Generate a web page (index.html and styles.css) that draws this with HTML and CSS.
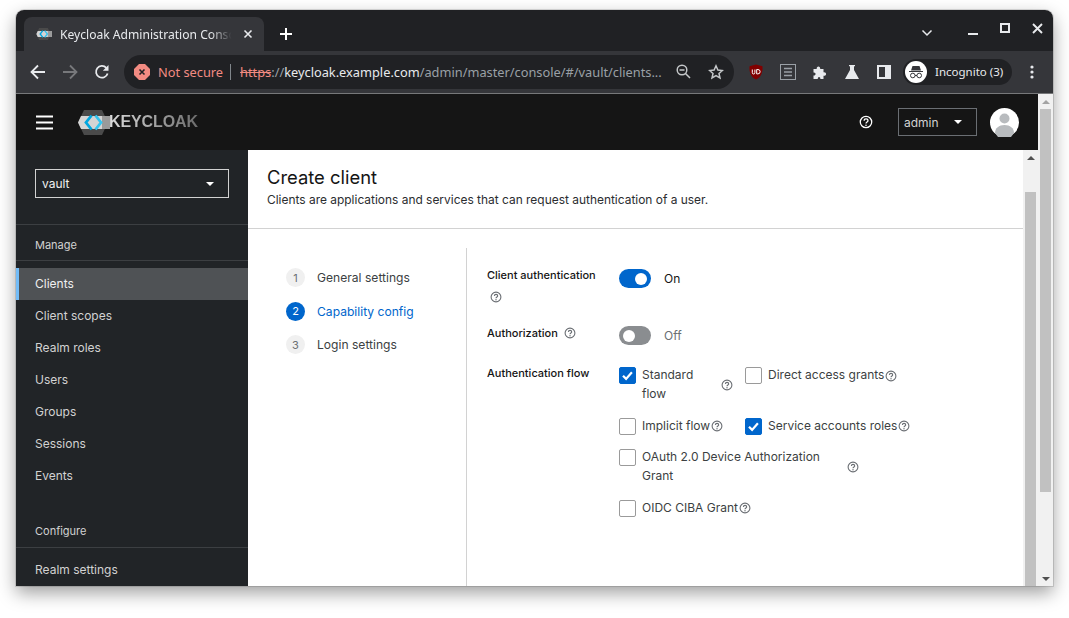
FILE: index.html
```html
<!DOCTYPE html>
<html lang="en">
<head>
    <meta charset="UTF-8">
    <meta name="viewport" content="width=device-width, initial-scale=1.0">
    <title>Keycloak Administration Console</title>
    <link rel="stylesheet" href="styles.css">
</head>
<body>
    <svg class="defs" width="0" height="0">
        <symbol id="help" viewBox="0 0 12 12">
            <circle cx="6" cy="6" r="4.9" fill="none" stroke="currentColor" stroke-width="1.1"/>
            <path d="M4.4 4.9c0-2.100 3.300-2.100 3.300 0 0 1.200-1.700 1.100-1.700 2.400" fill="none" stroke="currentColor" stroke-width="1.1"/>
            <circle cx="6" cy="8.800" r=".7" fill="currentColor"/>
        </symbol>
        <symbol id="tick" viewBox="0 0 16 16">
            <path d="M3.200 8.300l3.300 3.300 6.200-7" fill="none" stroke="#fff" stroke-width="2.400"/>
        </symbol>
        <symbol id="kc" viewBox="0 0 32 25">
            <path d="M6 0h18l6 12.500L24 25H6L0 12.500z" fill="#4a4a4a"/>
            <path d="M3 6h29v13H3l-3-6.500z" fill="#d4d4d4"/>
            <path d="M24 6h8v13h-8z" fill="#9a9a9a"/>
            <path d="M13.500 5.500L8 12.500l5.500 7" fill="none" stroke="#00a6df" stroke-width="2.800"/>
            <path d="M17.500 5.500l5.500 7-5.500 7" fill="none" stroke="#33c4ef" stroke-width="2.800"/>
        </symbol>
    </svg>

    <div class="window">
        <div class="tabstrip">
            <div class="tab">
                <svg class="favicon" width="16" height="12"><use href="#kc"/></svg>
                <span class="tab-title">Keycloak Administration Console</span>
                <svg class="tab-close" width="10" height="10" viewBox="0 0 10 10"><path d="M1.500 1.500l7 7M8.500 1.500l-7 7" stroke="#e8eaed" stroke-width="1.600"/></svg>
            </div>
            <svg class="new-tab" width="14" height="14" viewBox="0 0 14 14"><path d="M7 1v12M1 7h12" stroke="#fff" stroke-width="2"/></svg>
            <svg class="win-chevron" width="12" height="8" viewBox="0 0 12 8"><path d="M1.500 1.500L6 6l4.500-4.500" fill="none" stroke="#e8eaed" stroke-width="1.500"/></svg>
            <svg class="win-min" width="10" height="2"><rect width="10" height="2" fill="#e8eaed"/></svg>
            <svg class="win-max" width="10" height="10" viewBox="0 0 10 10"><rect x="1" y="1" width="8" height="8" fill="none" stroke="#e8eaed" stroke-width="2"/></svg>
            <svg class="win-close" width="11" height="11" viewBox="0 0 11 11"><path d="M1 1l9 9M10 1l-9 9" stroke="#e8eaed" stroke-width="1.900"/></svg>
        </div>

        <div class="toolbar">
            <svg class="nav-icon" width="16" height="16" viewBox="0 0 16 16"><path d="M15 8H2M8 1.500L1.500 8 8 14.500" fill="none" stroke="#e8eaed" stroke-width="1.800"/></svg>
            <svg class="nav-icon" width="16" height="16" viewBox="0 0 16 16"><path d="M1 8h13M8 1.500L14.500 8 8 14.500" fill="none" stroke="#77787b" stroke-width="1.800"/></svg>
            <svg class="nav-icon" width="16" height="16" viewBox="0 0 16 16"><path d="M13.600 9.500A5.900 5.900 0 1 1 12.300 3.800" fill="none" stroke="#e8eaed" stroke-width="1.800"/><path d="M14.500 1v5.800H8.800z" fill="#e8eaed"/></svg>
            <div class="omnibox">
                <svg class="warn-icon" width="16" height="16" viewBox="0 0 16 16"><path d="M5 0h6l5 5v6l-5 5H5l-5-5V5z" fill="#f28b82"/><path d="M5.500 5.500l5 5M10.500 5.500l-5 5" stroke="#202124" stroke-width="1.600"/></svg>
                <span class="not-secure">Not secure</span>
                <span class="omni-sep"></span>
                <span class="url"><s class="scheme">https</s><span class="url-dim">://</span>keycloak.example.com<span class="url-dim">/admin/master/console/#/vault/clients...</span></span>
                <svg class="omni-zoom" width="15" height="15" viewBox="0 0 15 15"><circle cx="6" cy="6" r="4.800" fill="none" stroke="#c4c7c9" stroke-width="1.500"/><path d="M9.500 9.500L14 14M3.500 6h5" stroke="#c4c7c9" stroke-width="1.500"/></svg>
                <svg class="omni-star" width="16" height="16" viewBox="0 0 16 16"><path d="M8 1.800l1.900 4.200 4.500.5-3.400 3 1 4.500L8 11.700 4 14l1-4.500-3.400-3 4.500-.5z" fill="none" stroke="#c4c7c9" stroke-width="1.500"/></svg>
            </div>
            <div class="ext-icons">
                <svg width="16" height="16" viewBox="0 0 16 16"><path d="M8 .5l6.500 1.700c.3 6-1 10.500-6.500 13.300C2.500 12.700 1.200 8.200 1.500 2.200z" fill="#800000"/><path d="M4.300 5.500v3.200a1.300 1.300 0 0 0 2.600 0V5.500M8.700 5.500v4.400h1.200a2.200 2.200 0 0 0 0-4.400z" fill="none" stroke="#fff" stroke-width="1"/></svg>
                <svg width="16" height="16" viewBox="0 0 16 16"><rect x=".5" y=".5" width="15" height="15" fill="none" stroke="#9aa0a6"/><path d="M4 4.500h8M4 8h8M4 11.500h8" stroke="#9aa0a6" stroke-width="1.500"/></svg>
                <svg width="16" height="16" viewBox="0 0 16 16"><path d="M1.500 5h3.200c-.6-3.500 4.100-3.500 3.500 0h3.300v3.200c3.500-.6 3.500 4.100 0 3.500V15H8.300c.5-2.800-3-2.800-2.500 0H1.500v-3.500c2.800.5 2.800-3.500 0-3z" fill="#e8eaed"/></svg>
                <svg width="16" height="16" viewBox="0 0 16 16"><path d="M5 1h6v1.200h-1V6l5 9H1l5-9V2.200H5z" fill="#e8eaed"/></svg>
                <svg width="16" height="16" viewBox="0 0 16 16"><rect x="1" y="1" width="14" height="14" fill="#e8eaed"/><rect x="3" y="3" width="6" height="10" fill="#35363a"/></svg>
            </div>
            <div class="incognito">
                <svg class="incognito-icon" width="22" height="22" viewBox="0 0 22 22"><circle cx="11" cy="11" r="11" fill="#fff"/><path d="M7.500 5h7l1.500 4.500H6zM4 10h14v1H4z" fill="#35363a"/><circle cx="7.800" cy="14.500" r="2.300" fill="none" stroke="#35363a"/><circle cx="14.200" cy="14.500" r="2.300" fill="none" stroke="#35363a"/><path d="M10 14.500h2" stroke="#35363a"/></svg>
                <span>Incognito (3)</span>
            </div>
            <svg class="menu-dots" width="4" height="14" viewBox="0 0 4 14"><circle cx="2" cy="2" r="1.600" fill="#e8eaed"/><circle cx="2" cy="7" r="1.600" fill="#e8eaed"/><circle cx="2" cy="12" r="1.600" fill="#e8eaed"/></svg>
        </div>

        <div class="page">
            <div class="app">
                <header class="masthead">
                    <svg class="burger" width="17" height="15" viewBox="0 0 17 15"><path d="M0 1.500h17M0 7.500h17M0 13.500h17" stroke="#fff" stroke-width="2.200"/></svg>
                    <div class="logo">
                        <svg width="32" height="25"><use href="#kc"/></svg>
                        <span class="logo-text">KEYCLOAK</span>
                    </div>
                    <svg class="top-help" width="14" height="14"><use href="#help"/></svg>
                    <div class="user-select"><span>admin</span><i class="caret"></i></div>
                    <svg class="avatar" width="29" height="29" viewBox="0 0 29 29"><circle cx="14.500" cy="14.500" r="14.500" fill="#fff"/><circle cx="14.500" cy="10.500" r="5" fill="#b8bbbe"/><path d="M5 25c0-5 4-8 9.500-8s9.500 3 9.500 8l-3 4H8z" fill="#b8bbbe"/></svg>
                </header>

                <div class="app-body">
                    <aside class="sidebar">
                        <div class="realm-wrap">
                            <div class="realm-select"><span>vault</span><i class="caret"></i></div>
                        </div>
                        <div class="side-group">Manage</div>
                        <ul class="side-list">
                            <li class="active">Clients</li>
                            <li>Client scopes</li>
                            <li>Realm roles</li>
                            <li>Users</li>
                            <li>Groups</li>
                            <li>Sessions</li>
                            <li>Events</li>
                        </ul>
                        <div class="side-group configure">Configure</div>
                        <ul class="side-list">
                            <li>Realm settings</li>
                        </ul>
                    </aside>

                    <main class="content">
                        <div class="page-head">
                            <h1>Create client</h1>
                            <p>Clients are applications and services that can request authentication of a user.</p>
                        </div>
                        <div class="wizard">
                            <ol class="steps">
                                <li><span class="step-num">1</span>General settings</li>
                                <li class="current"><span class="step-num">2</span>Capability config</li>
                                <li><span class="step-num">3</span>Login settings</li>
                            </ol>
                            <form class="cap-form">
                                <div class="field field-auth">
                                    <div class="field-label">
                                        <div>Client authentication</div>
                                        <svg class="help" width="12" height="12"><use href="#help"/></svg>
                                    </div>
                                    <div class="switch-row"><span class="switch on"></span><span>On</span></div>
                                </div>
                                <div class="field field-authz">
                                    <div class="field-label">Authorization <svg class="help help-inline" width="12" height="12"><use href="#help"/></svg></div>
                                    <div class="switch-row off"><span class="switch"></span><span>Off</span></div>
                                </div>
                                <div class="field">
                                    <div class="field-label">Authentication flow</div>
                                    <div class="flows">
                                        <div class="flow-row">
                                            <div class="check check-standard">
                                                <span class="box checked"><svg width="16" height="16"><use href="#tick"/></svg></span>
                                                <span class="check-text">Standard flow</span>
                                                <svg class="help" width="12" height="12"><use href="#help"/></svg>
                                            </div>
                                            <div class="check">
                                                <span class="box"></span>
                                                <span class="check-text">Direct access grants</span>
                                                <svg class="help" width="12" height="12"><use href="#help"/></svg>
                                            </div>
                                        </div>
                                        <div class="flow-row">
                                            <div class="check check-implicit">
                                                <span class="box"></span>
                                                <span class="check-text">Implicit flow</span>
                                                <svg class="help" width="12" height="12"><use href="#help"/></svg>
                                            </div>
                                            <div class="check">
                                                <span class="box checked"><svg width="16" height="16"><use href="#tick"/></svg></span>
                                                <span class="check-text">Service accounts roles</span>
                                                <svg class="help" width="12" height="12"><use href="#help"/></svg>
                                            </div>
                                        </div>
                                        <div class="check check-oauth">
                                            <span class="box"></span>
                                            <span class="check-text">OAuth 2.0 Device Authorization Grant</span>
                                            <svg class="help" width="12" height="12"><use href="#help"/></svg>
                                        </div>
                                        <div class="check">
                                            <span class="box"></span>
                                            <span class="check-text">OIDC CIBA Grant</span>
                                            <svg class="help" width="12" height="12"><use href="#help"/></svg>
                                        </div>
                                    </div>
                                </div>
                            </form>
                        </div>
                    </main>

                    <div class="scrollbar inner">
                        <i class="arrow up"></i>
                        <div class="thumb"></div>
                    </div>
                </div>
            </div>

            <div class="scrollbar outer">
                <i class="arrow up"></i>
                <div class="thumb"></div>
                <i class="arrow down"></i>
            </div>
        </div>
    </div>
</body>
</html>
```

FILE: styles.css
```css
* {
    box-sizing: border-box;
}
html, body {
    height: 100%;
}
body {
    margin: 0;
    padding: 10px 16px 32px;
    background: #fff;
    overflow: hidden;
    font-family: Inter, "Open Sans", sans-serif;
}
.defs {
    position: absolute;
}
svg {
    display: block;
    flex: none;
}
.window {
    width: 1037px;
    height: 576px;
    display: flex;
    flex-direction: column;
    overflow: hidden;
    border-radius: 8px 8px 0 0;
    box-shadow: 0 0 0 1px rgba(0,0,0,0.12), 0 7px 18px rgba(0,0,0,0.38);
    position: relative;
}

/* tab strip */
.tabstrip {
    height: 41px;
    background: #202124;
    display: flex;
    align-items: flex-start;
    padding: 7px 0 0 8px;
    flex: none;
}
.tab {
    width: 240px;
    height: 34px;
    background: #35363a;
    border-radius: 8px 8px 0 0;
    display: flex;
    align-items: center;
    padding: 0 11px 0 12px;
    font: 12.1px "Noto Sans", sans-serif;
    color: #e8eaed;
}
.favicon {
    margin-right: 8px;
}
.tab-title {
    flex: 1;
    overflow: hidden;
    white-space: nowrap;
    -webkit-mask-image: linear-gradient(90deg, #000 85%, transparent 97%);
    mask-image: linear-gradient(90deg, #000 85%, transparent 97%);
}
.tab-close {
    margin-left: 6px;
}
.new-tab {
    margin: 10px 0 0 15px;
}
.win-chevron {
    margin: 12px 0 0 628px;
}
.win-min {
    margin: 16px 0 0 35px;
}
.win-max {
    margin: 6px 0 0 22px;
}
.win-close {
    margin: 6px 0 0 22px;
}

/* toolbar */
.toolbar {
    height: 43px;
    background: #35363a;
    border-bottom: 1px solid #77787a;
    display: flex;
    align-items: center;
    padding: 0 0 1px 14px;
    flex: none;
}
.nav-icon {
    margin-right: 16px;
}
.omnibox {
    width: 610px;
    height: 34px;
    margin-left: -2px;
    background: #202124;
    border-radius: 17px;
    display: flex;
    align-items: center;
    padding: 0 10px;
    font: 12.8px "Noto Sans", sans-serif;
    color: #e8eaed;
    white-space: nowrap;
}
.not-secure {
    color: #f28b82;
    margin-left: 8px;
}
.omni-sep {
    width: 1px;
    height: 16px;
    background: #80868b;
    margin: 0 9px 0 7px;
}
.scheme {
    color: #f28b82;
}
.url-dim {
    color: #9aa0a6;
}
.omni-zoom {
    margin-left: auto;
}
.omni-star {
    margin-left: 17px;
}
.ext-icons {
    display: flex;
    align-items: center;
    gap: 16px;
    margin-left: 14px;
}
.incognito {
    width: 109px;
    height: 26px;
    margin-left: 11px;
    background: #202124;
    border-radius: 13px;
    display: flex;
    align-items: center;
    padding-left: 2px;
    font: 11.5px "Noto Sans", sans-serif;
    color: #e8eaed;
}
.incognito-icon {
    margin-right: 8px;
}
.menu-dots {
    margin-left: 18px;
}

/* page */
.page {
    flex: 1;
    display: flex;
    min-height: 0;
}
.app {
    flex: 1;
    display: flex;
    flex-direction: column;
    min-width: 0;
}
.masthead {
    height: 56px;
    background: #151515;
    display: flex;
    align-items: center;
    padding: 0 19px 0 20px;
    flex: none;
}
.logo {
    display: flex;
    align-items: center;
    margin-left: 25px;
}
.logo-text {
    font: bold 16px "Liberation Sans", sans-serif;
    letter-spacing: -0.1px;
    margin-left: -1px;
    background: linear-gradient(90deg, #dcdcdc, #6c6c6c);
    -webkit-background-clip: text;
    background-clip: text;
    color: transparent;
}
.top-help {
    margin-left: auto;
    color: #fff;
}
.user-select {
    width: 79px;
    height: 28px;
    margin-left: 25px;
    border: 1px solid #6a6e73;
    display: flex;
    align-items: center;
    justify-content: space-between;
    padding: 0 14px 0 5px;
    font-size: 12px;
    color: #d2d2d2;
}
.caret {
    width: 0;
    height: 0;
    border-left: 4px solid transparent;
    border-right: 4px solid transparent;
    border-top: 4px solid #fff;
}
.avatar {
    margin-left: 13px;
}
.app-body {
    flex: 1;
    display: flex;
    min-height: 0;
}

/* sidebar */
.sidebar {
    width: 232px;
    background: #212427;
    color: #d2d2d2;
    font-size: 12px;
    flex: none;
    overflow: hidden;
}
.realm-wrap {
    height: 75px;
    padding: 19px 19px 0;
    border-bottom: 1px solid #3c3f42;
}
.realm-select {
    height: 29px;
    border: 1px solid #d2d2d2;
    display: flex;
    align-items: center;
    justify-content: space-between;
    padding: 0 14px 0 6px;
    color: #f0f0f0;
}
.side-group {
    height: 36px;
    padding: 13px 0 0 19px;
    border-bottom: 1px solid #3c3f42;
    font-size: 11px;
}
.configure {
    margin-top: 16px;
    height: 40px;
    padding-top: 16px;
}
.side-list {
    list-style: none;
    margin: 7px 0 0;
    padding: 0;
}
.configure + .side-list {
    margin-top: 6px;
}
.side-list li {
    height: 32px;
    line-height: 32px;
    padding-left: 19px;
}
.side-list .active {
    background: #4f5255;
    border-left: 3px solid #73bcf7;
    padding-left: 16px;
    color: #f0f0f0;
}

/* main */
.content {
    flex: 1;
    background: #fff;
    color: #151515;
    min-width: 0;
    display: flex;
    flex-direction: column;
}
.page-head {
    height: 79px;
    padding: 15px 20px 0 19px;
    border-bottom: 1px solid #d2d2d2;
    flex: none;
}
.page-head h1 {
    margin: 0;
    font-size: 18.4px;
    font-weight: 400;
    line-height: 25px;
}
.page-head p {
    margin: 2px 0 0;
    font-size: 11.95px;
    line-height: 16px;
    color: #2b2d30;
}
.wizard {
    flex: 1;
    display: flex;
    margin-top: 19px;
    min-height: 0;
}
.steps {
    width: 219px;
    flex: none;
    margin: 0;
    padding: 20px 0 0 38px;
    list-style: none;
    border-right: 1px solid #d2d2d2;
    font-size: 12.1px;
    color: #3c3f42;
}
.steps li {
    display: flex;
    align-items: center;
    height: 19px;
    margin-bottom: 14.5px;
}
.step-num {
    width: 19px;
    height: 19px;
    border-radius: 50%;
    background: #f0f0f0;
    color: #6a6e73;
    font-size: 11px;
    display: flex;
    align-items: center;
    justify-content: center;
    margin-right: 12px;
}
.steps .current {
    color: #06c;
}
.current .step-num {
    background: #06c;
    color: #fff;
}

/* form */
.cap-form {
    flex: 1;
    padding: 20px 0 0 20px;
    font-size: 12px;
}
.field {
    display: flex;
}
.field-label {
    width: 132px;
    flex: none;
    font-size: 11px;
    font-weight: 500;
    line-height: 15px;
}
.field-auth {
    height: 58px;
}
.field-authz {
    height: 40px;
}
.field-label .help {
    margin: 8px 0 0 3px;
}
.field-label .help-inline {
    display: inline-block;
    margin: 0 0 -2px 3px;
}
.help {
    color: #6a6e73;
}
.switch-row {
    display: flex;
    align-items: center;
    gap: 13px;
    height: 19px;
    margin-top: 1px;
}
.switch-row.off {
    color: #6a6e73;
    margin-top: 0;
}
.switch {
    width: 32px;
    height: 19px;
    border-radius: 10px;
    background: #8a8d90;
    position: relative;
}
.switch::before {
    content: "";
    position: absolute;
    top: 3.5px;
    left: 4px;
    width: 12px;
    height: 12px;
    border-radius: 50%;
    background: #fff;
}
.switch.on {
    background: #06c;
}
.switch.on::before {
    left: 16px;
}
.flows {
    margin-top: 1px;
    width: 300px;
    display: flex;
    flex-direction: column;
    gap: 14.6px;
}
.flow-row {
    display: flex;
    align-items: flex-start;
}
.check {
    display: flex;
    align-items: flex-start;
    line-height: 19px;
    color: #3c3f42;
}
.check-text {
    margin-top: -2px;
}
.box {
    width: 17px;
    height: 17px;
    border: 1px solid #9a9a9a;
    border-radius: 2px;
    margin-right: 6px;
    flex: none;
}
.box.checked {
    background: #06c;
    border-color: #06c;
}
.box.checked svg {
    width: 15px;
    height: 15px;
}
.check .help {
    margin-left: 1px;
    align-self: center;
}
.check-standard {
    width: 126px;
}
.check-standard .check-text {
    width: 58px;
    margin-right: 20px;
}
.check-implicit {
    width: 126px;
}
.check-oauth .check-text {
    width: 204px;
}

/* scrollbars */
.scrollbar {
    width: 15px;
    flex: none;
    background: #f1f1f1;
    display: flex;
    flex-direction: column;
    align-items: center;
}
.scrollbar.outer {
    padding: 6px 0 5px;
}
.scrollbar.inner {
    padding-top: 6px;
}
.thumb {
    width: 11px;
    background: #c1c1c1;
}
.outer .thumb {
    height: 383px;
    margin: 5px 0 auto;
}
.inner .thumb {
    flex: 1;
    margin-top: 32px;
}
.arrow {
    width: 0;
    height: 0;
    border-left: 4px solid transparent;
    border-right: 4px solid transparent;
}
.arrow.up {
    border-bottom: 4px solid #505050;
}
.outer .arrow.up {
    border-bottom-color: #a3a3a3;
}
.arrow.down {
    border-top: 4px solid #505050;
}
```
